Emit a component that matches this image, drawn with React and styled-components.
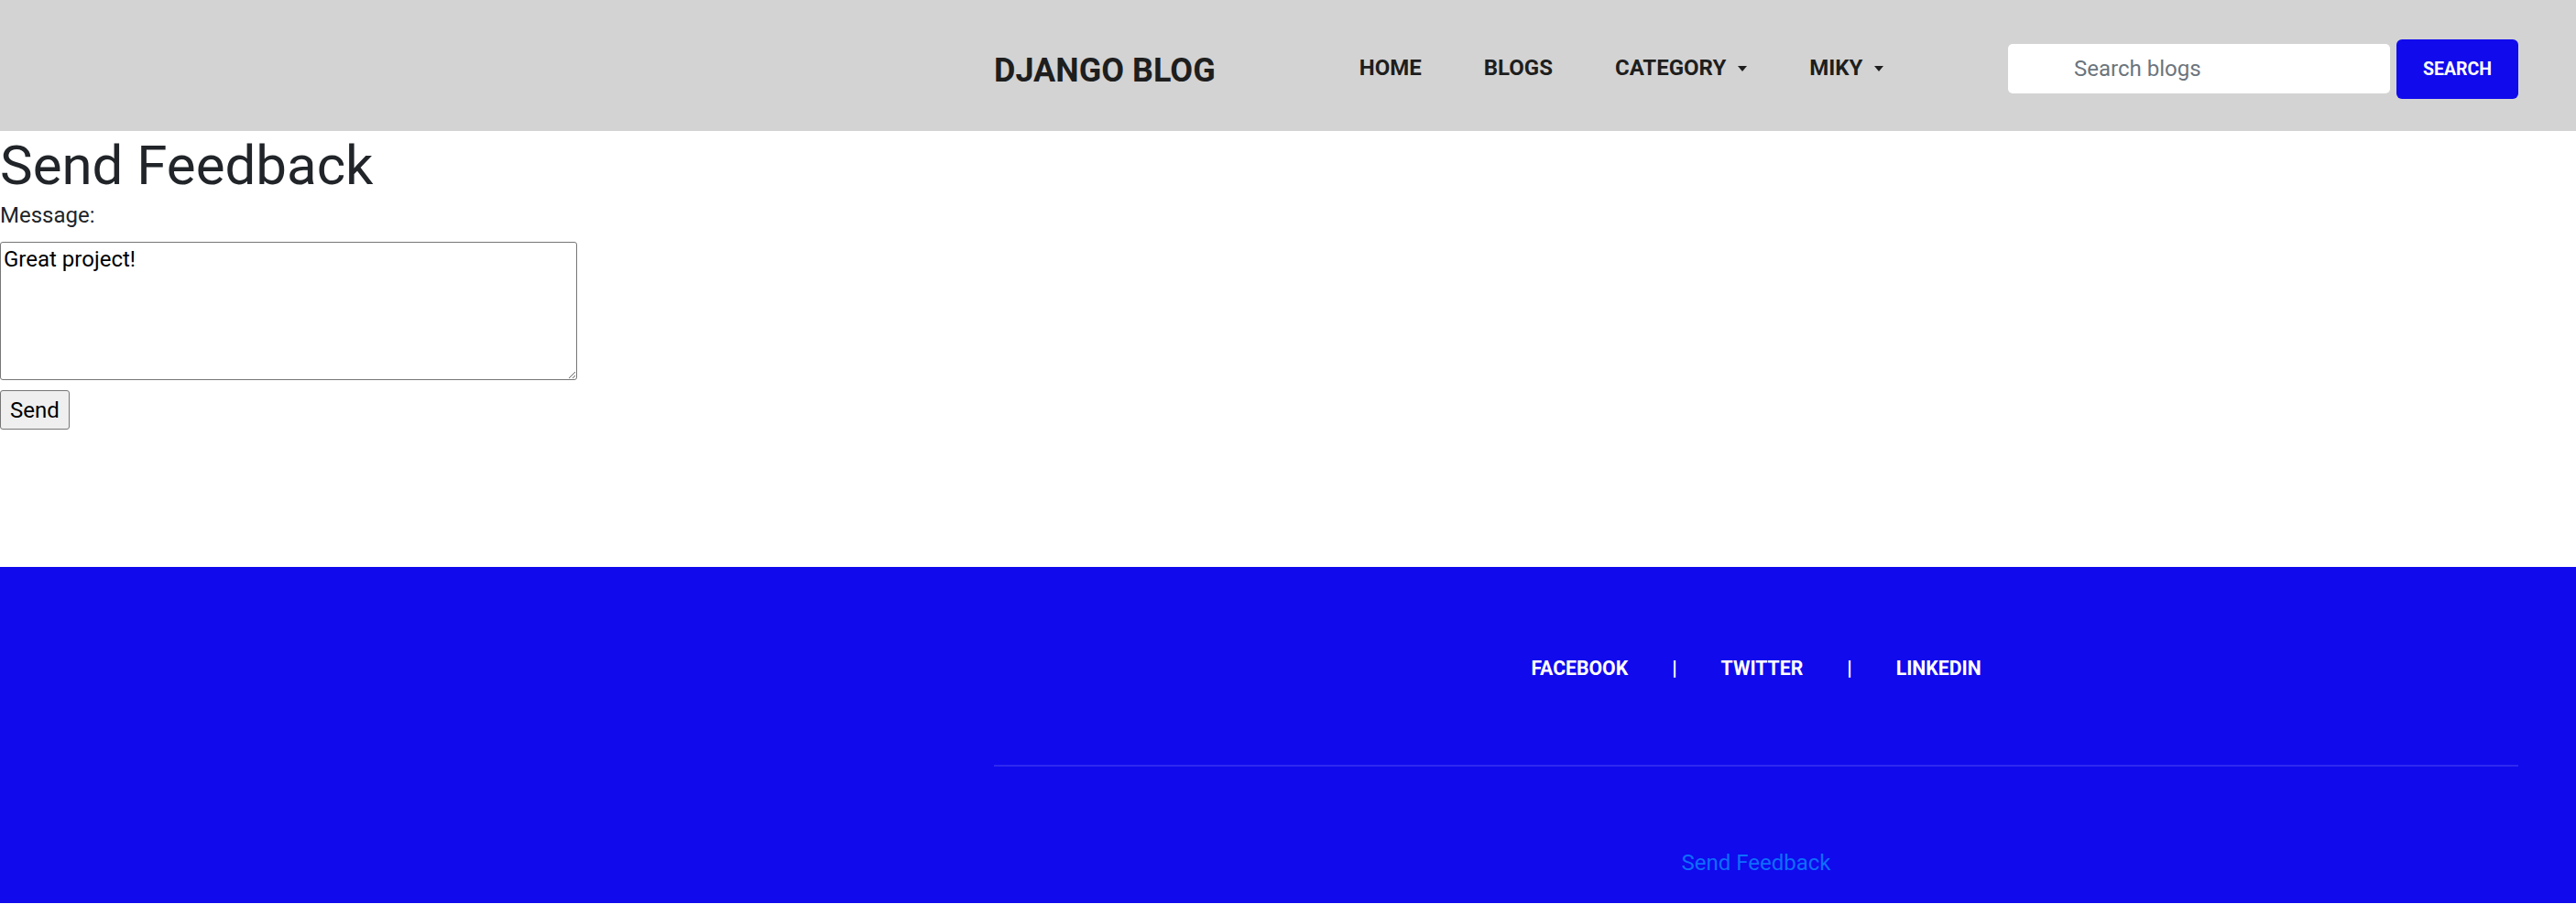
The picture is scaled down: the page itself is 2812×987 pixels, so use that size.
import styled, { createGlobalStyle } from "styled-components";

const GlobalStyle = createGlobalStyle`
    * {
        box-sizing: border-box;
    }

    body {
        margin: 0;
        font-family: Roboto, "Liberation Sans", sans-serif;
        font-size: 24px;
        color: #212529;
        background-color: #ffffff;
    }
`

const navLinks = [
    { label: "HOME" },
    { label: "BLOGS" },
    { label: "CATEGORY", dropdown: true },
    { label: "MIKY", dropdown: true },
];

const socialLinks = ["FACEBOOK", "TWITTER", "LINKEDIN"];

export default function App() {
    return (
        <>
            <GlobalStyle />
            <Header>
                <Container>
                    <Brand>DJANGO BLOG</Brand>
                    <Nav>
                        {navLinks.map((link) => (
                            <NavLink key={link.label}>
                                {link.label}
                                {link.dropdown && <Caret />}
                            </NavLink>
                        ))}
                    </Nav>
                    <SearchForm onSubmit={(e) => e.preventDefault()}>
                        <SearchInput type="text" placeholder="Search blogs" />
                        <SearchButton type="submit">SEARCH</SearchButton>
                    </SearchForm>
                </Container>
            </Header>

            <Main>
                <Title>Send Feedback</Title>
                <FeedbackForm onSubmit={(e) => e.preventDefault()}>
                    <Label htmlFor="message">Message:</Label>
                    <MessageBox id="message" defaultValue="Great project!" />
                    <SendButton type="submit">Send</SendButton>
                </FeedbackForm>
            </Main>

            <Footer>
                <FooterInner>
                    <Social>
                        {socialLinks.map((name, i) => (
                            <SocialItem key={name}>
                                {i > 0 && <Divider>|</Divider>}
                                <SocialLink>{name}</SocialLink>
                            </SocialItem>
                        ))}
                    </Social>
                    <Rule />
                    <FeedbackLink href="#">Send Feedback</FeedbackLink>
                </FooterInner>
            </Footer>
        </>
    )
}

const Container = styled.div`
    width: 1664px;
    margin-left: 1085px;
    display: flex;
    align-items: center;
`

const Header = styled.header`
    height: 143px;
    padding-top: 7px;
    background-color: #d3d3d3;
    display: flex;
    align-items: center;
`

const Brand = styled.a`
    font-size: 36px;
    font-weight: 700;
    line-height: 54px;
    color: #1e1e1e;
    margin-top: 3px;
    white-space: nowrap;
`

const Nav = styled.nav`
    display: flex;
    align-items: center;
    gap: 68px;
    margin-left: 157px;
    margin-top: -2px;
`

const NavLink = styled.a`
    display: flex;
    align-items: center;
    font-size: 24px;
    font-weight: 700;
    line-height: 36px;
    color: #1e1e1e;
    white-space: nowrap;
`

const Caret = styled.span`
    display: inline-block;
    margin-left: 13px;
    margin-top: 2px;
    width: 0;
    height: 0;
    border-top: 6px solid #1e1e1e;
    border-left: 5.5px solid transparent;
    border-right: 5.5px solid transparent;
`

const SearchForm = styled.form`
    margin-left: auto;
    display: flex;
    align-items: center;
    gap: 7px;
`

const SearchInput = styled.input`
    width: 417px;
    height: 54px;
    border: none;
    border-radius: 5px;
    background: #ffffff;
    padding: 0 0 0 72px;
    font-family: Roboto, "Liberation Sans", sans-serif;
    font-size: 24px;
    color: #212529;
    outline: none;

    &::placeholder {
        color: #6c757d;
    }
`

const SearchButton = styled.button`
    width: 133px;
    height: 65px;
    border: none;
    border-radius: 6px;
    background-color: #100aed;
    color: #ffffff;
    font-family: Roboto, "Liberation Sans", sans-serif;
    font-size: 19.5px;
    font-weight: 700;
`

const Main = styled.main`
    height: 476px;
    padding-top: 2px;
`

const Title = styled.h1`
    margin: 0;
    font-size: 60px;
    font-weight: 400;
    line-height: 72px;
    color: #212529;
`

const FeedbackForm = styled.form`
    display: flex;
    flex-direction: column;
    align-items: flex-start;
    gap: 11px;
`

const Label = styled.label`
    font-size: 24px;
    line-height: 36px;
    color: #212529;
`

const MessageBox = styled.textarea`
    width: 630px;
    height: 151px;
    padding: 4px 3px 3px 3px;
    border: 1.5px solid #767676;
    border-radius: 3px;
    font-family: Roboto, "Liberation Sans", sans-serif;
    font-size: 24px;
    line-height: normal;
    color: #000000;
    resize: both;
`

const SendButton = styled.button`
    height: 43px;
    padding: 0 10px;
    border: 1.5px solid #767676;
    border-radius: 3px;
    background-color: #efefef;
    font-family: Roboto, "Liberation Sans", sans-serif;
    font-size: 24px;
    color: #000000;
`

const Footer = styled.footer`
    background-color: #100aed;
    padding: 95px 0 26px 0;
`

const FooterInner = styled.div`
    width: 1664px;
    margin-left: 1085px;
    display: flex;
    flex-direction: column;
    align-items: center;
`

const Social = styled.div`
    display: flex;
    align-items: center;
`

const SocialItem = styled.div`
    display: flex;
    align-items: center;
`

const SocialLink = styled.a`
    font-size: 21.2px;
    font-weight: 700;
    line-height: 32.4px;
    color: #ffffff;
`

const Divider = styled.span`
    margin: 0 48px;
    font-size: 21.6px;
    font-weight: 700;
    line-height: 32.4px;
    color: #ffffff;
`

const Rule = styled.hr`
    width: 100%;
    margin: 89px 0 87px 0;
    border: none;
    border-top: 2px solid rgba(255, 255, 255, 0.13);
`

const FeedbackLink = styled.a`
    font-size: 24px;
    line-height: 36px;
    color: #0d6efd;
    text-decoration: none;
`
